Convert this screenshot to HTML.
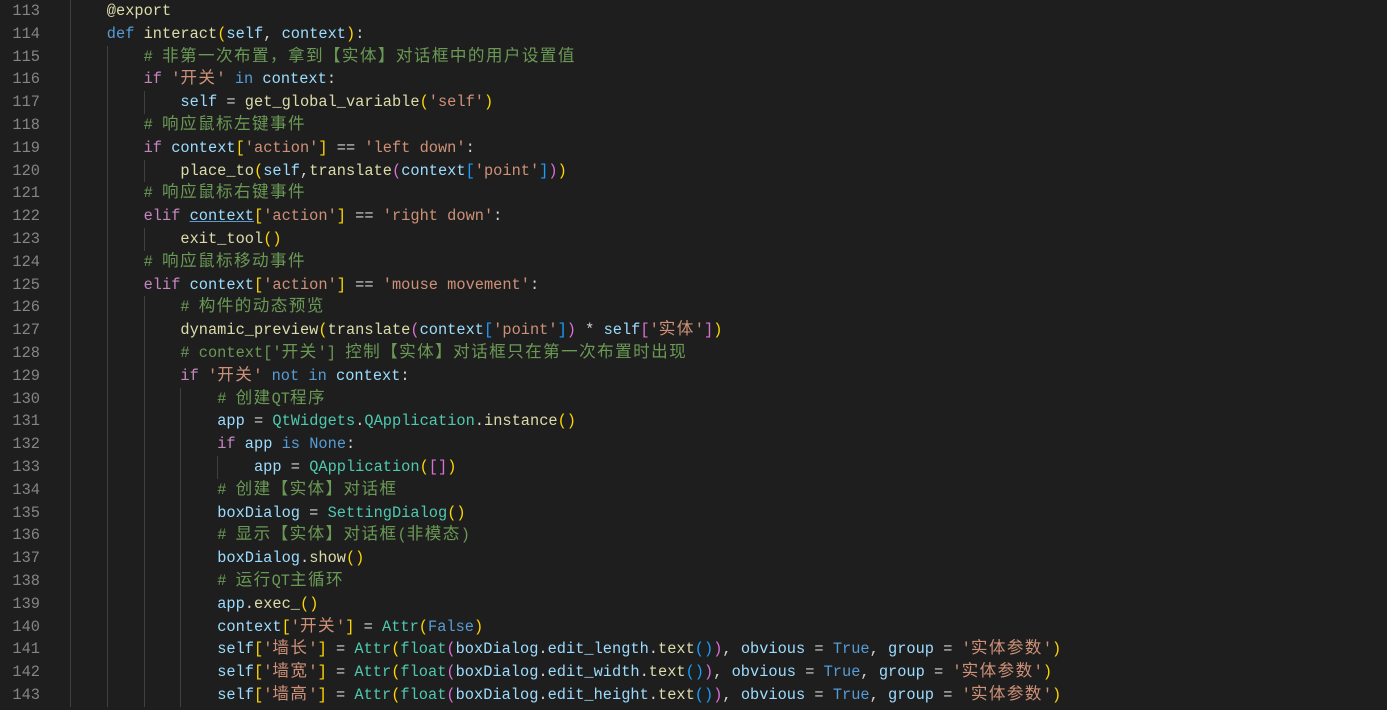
<!DOCTYPE html>
<html><head><meta charset="utf-8"><style>
html,body{margin:0;padding:0;background:#1e1e1e;width:1387px;height:710px;overflow:hidden}
#ed{position:relative;top:0px;font-family:"Liberation Mono","Noto Sans CJK SC",monospace;font-size:15.33px;color:#d4d4d4}
.l{position:relative;height:22.8px;line-height:22.8px;white-space:pre}
.n{position:absolute;left:0;width:40px;text-align:right;color:#858585}
.t{position:absolute;left:70px;top:0;height:22.8px;line-height:22.8px}
.g{position:absolute;top:0;width:1px;height:22.8px;background:#404040}
.c{font-family:"Noto Sans CJK SC",sans-serif;font-size:16.6px;letter-spacing:1.4px;line-height:0;vertical-align:baseline}
.k{color:#569cd6}.f{color:#dcdcaa}.v{color:#9cdcfe}.s{color:#ce9178}.cm{color:#6a9955}.p{color:#c586c0}.y{color:#4ec9b0}
.b1{color:#ffd700}.b2{color:#da70d6}.b3{color:#179fff}.u{text-decoration:underline;text-decoration-color:#569cd6}
</style></head><body><div id="ed">
<div class="l" data-i="1"><span class="t">    <span class="f">@export</span></span></div>
<div class="l" data-i="1"><span class="t">    <span class="k">def</span> <span class="f">interact</span><span class="b1">(</span><span class="v">self</span>, <span class="v">context</span><span class="b1">)</span>:</span></div>
<div class="l" data-i="2"><span class="t">        <span class="cm"># 非第一次布置，拿到【实体】对话框中的用户设置值</span></span></div>
<div class="l" data-i="2"><span class="t">        <span class="p">if</span> <span class="s">'开关'</span> <span class="k">in</span> <span class="v">context</span>:</span></div>
<div class="l" data-i="3"><span class="t">            <span class="v">self</span> = <span class="f">get_global_variable</span><span class="b1">(</span><span class="s">'self'</span><span class="b1">)</span></span></div>
<div class="l" data-i="2"><span class="t">        <span class="cm"># 响应鼠标左键事件</span></span></div>
<div class="l" data-i="2"><span class="t">        <span class="p">if</span> <span class="v">context</span><span class="b1">[</span><span class="s">'action'</span><span class="b1">]</span> == <span class="s">'left down'</span>:</span></div>
<div class="l" data-i="3"><span class="t">            <span class="f">place_to</span><span class="b1">(</span><span class="v">self</span>,<span class="f">translate</span><span class="b2">(</span><span class="v">context</span><span class="b3">[</span><span class="s">'point'</span><span class="b3">]</span><span class="b2">)</span><span class="b1">)</span></span></div>
<div class="l" data-i="2"><span class="t">        <span class="cm"># 响应鼠标右键事件</span></span></div>
<div class="l" data-i="2"><span class="t">        <span class="p">elif</span> <span class="v u">context</span><span class="b1">[</span><span class="s">'action'</span><span class="b1">]</span> == <span class="s">'right down'</span>:</span></div>
<div class="l" data-i="3"><span class="t">            <span class="f">exit_tool</span><span class="b1">()</span></span></div>
<div class="l" data-i="2"><span class="t">        <span class="cm"># 响应鼠标移动事件</span></span></div>
<div class="l" data-i="2"><span class="t">        <span class="p">elif</span> <span class="v">context</span><span class="b1">[</span><span class="s">'action'</span><span class="b1">]</span> == <span class="s">'mouse movement'</span>:</span></div>
<div class="l" data-i="3"><span class="t">            <span class="cm"># 构件的动态预览</span></span></div>
<div class="l" data-i="3"><span class="t">            <span class="f">dynamic_preview</span><span class="b1">(</span><span class="f">translate</span><span class="b2">(</span><span class="v">context</span><span class="b3">[</span><span class="s">'point'</span><span class="b3">]</span><span class="b2">)</span> * <span class="v">self</span><span class="b2">[</span><span class="s">'实体'</span><span class="b2">]</span><span class="b1">)</span></span></div>
<div class="l" data-i="3"><span class="t">            <span class="cm"># context['开关'] 控制【实体】对话框只在第一次布置时出现</span></span></div>
<div class="l" data-i="3"><span class="t">            <span class="p">if</span> <span class="s">'开关'</span> <span class="k">not</span> <span class="k">in</span> <span class="v">context</span>:</span></div>
<div class="l" data-i="4"><span class="t">                <span class="cm"># 创建QT程序</span></span></div>
<div class="l" data-i="4"><span class="t">                <span class="v">app</span> = <span class="y">QtWidgets</span>.<span class="y">QApplication</span>.<span class="f">instance</span><span class="b1">()</span></span></div>
<div class="l" data-i="4"><span class="t">                <span class="p">if</span> <span class="v">app</span> <span class="k">is</span> <span class="k">None</span>:</span></div>
<div class="l" data-i="5"><span class="t">                    <span class="v">app</span> = <span class="y">QApplication</span><span class="b1">(</span><span class="b2">[]</span><span class="b1">)</span></span></div>
<div class="l" data-i="4"><span class="t">                <span class="cm"># 创建【实体】对话框</span></span></div>
<div class="l" data-i="4"><span class="t">                <span class="v">boxDialog</span> = <span class="y">SettingDialog</span><span class="b1">()</span></span></div>
<div class="l" data-i="4"><span class="t">                <span class="cm"># 显示【实体】对话框(非模态)</span></span></div>
<div class="l" data-i="4"><span class="t">                <span class="v">boxDialog</span>.<span class="f">show</span><span class="b1">()</span></span></div>
<div class="l" data-i="4"><span class="t">                <span class="cm"># 运行QT主循环</span></span></div>
<div class="l" data-i="4"><span class="t">                <span class="v">app</span>.<span class="f">exec_</span><span class="b1">()</span></span></div>
<div class="l" data-i="4"><span class="t">                <span class="v">context</span><span class="b1">[</span><span class="s">'开关'</span><span class="b1">]</span> = <span class="y">Attr</span><span class="b1">(</span><span class="k">False</span><span class="b1">)</span></span></div>
<div class="l" data-i="4"><span class="t">                <span class="v">self</span><span class="b1">[</span><span class="s">'墙长'</span><span class="b1">]</span> = <span class="y">Attr</span><span class="b1">(</span><span class="y">float</span><span class="b2">(</span><span class="v">boxDialog</span>.<span class="v">edit_length</span>.<span class="f">text</span><span class="b3">()</span><span class="b2">)</span>, <span class="v">obvious</span> = <span class="k">True</span>, <span class="v">group</span> = <span class="s">'实体参数'</span><span class="b1">)</span></span></div>
<div class="l" data-i="4"><span class="t">                <span class="v">self</span><span class="b1">[</span><span class="s">'墙宽'</span><span class="b1">]</span> = <span class="y">Attr</span><span class="b1">(</span><span class="y">float</span><span class="b2">(</span><span class="v">boxDialog</span>.<span class="v">edit_width</span>.<span class="f">text</span><span class="b3">()</span><span class="b2">)</span>, <span class="v">obvious</span> = <span class="k">True</span>, <span class="v">group</span> = <span class="s">'实体参数'</span><span class="b1">)</span></span></div>
<div class="l" data-i="4"><span class="t">                <span class="v">self</span><span class="b1">[</span><span class="s">'墙高'</span><span class="b1">]</span> = <span class="y">Attr</span><span class="b1">(</span><span class="y">float</span><span class="b2">(</span><span class="v">boxDialog</span>.<span class="v">edit_height</span>.<span class="f">text</span><span class="b3">()</span><span class="b2">)</span>, <span class="v">obvious</span> = <span class="k">True</span>, <span class="v">group</span> = <span class="s">'实体参数'</span><span class="b1">)</span></span></div>
</div>
<script>
var ls=document.querySelectorAll('.l');
ls.forEach(function(d,i){
  var n=document.createElement('span');n.className='n';n.textContent=113+i;d.insertBefore(n,d.firstChild);
  var lv=+d.getAttribute('data-i');
  for(var j=0;j<lv;j++){var g=document.createElement('span');g.className='g';g.style.left=(70+36.8*j)+'px';d.appendChild(g);}
});
var re=/[\u3000-\u303f\u4e00-\u9fff\uff00-\uffef]+/g;
var w=document.createTreeWalker(document.getElementById('ed'),NodeFilter.SHOW_TEXT);
var nodes=[];while(w.nextNode())nodes.push(w.currentNode);
nodes.forEach(function(t){
  var s=t.nodeValue;if(!re.test(s))return;re.lastIndex=0;
  var f=document.createDocumentFragment(),last=0,m;
  while((m=re.exec(s))){f.appendChild(document.createTextNode(s.slice(last,m.index)));var sp=document.createElement('span');sp.className='c';sp.textContent=m[0];f.appendChild(sp);last=m.index+m[0].length;}
  f.appendChild(document.createTextNode(s.slice(last)));t.parentNode.replaceChild(f,t);
});
</script>
</body></html>
